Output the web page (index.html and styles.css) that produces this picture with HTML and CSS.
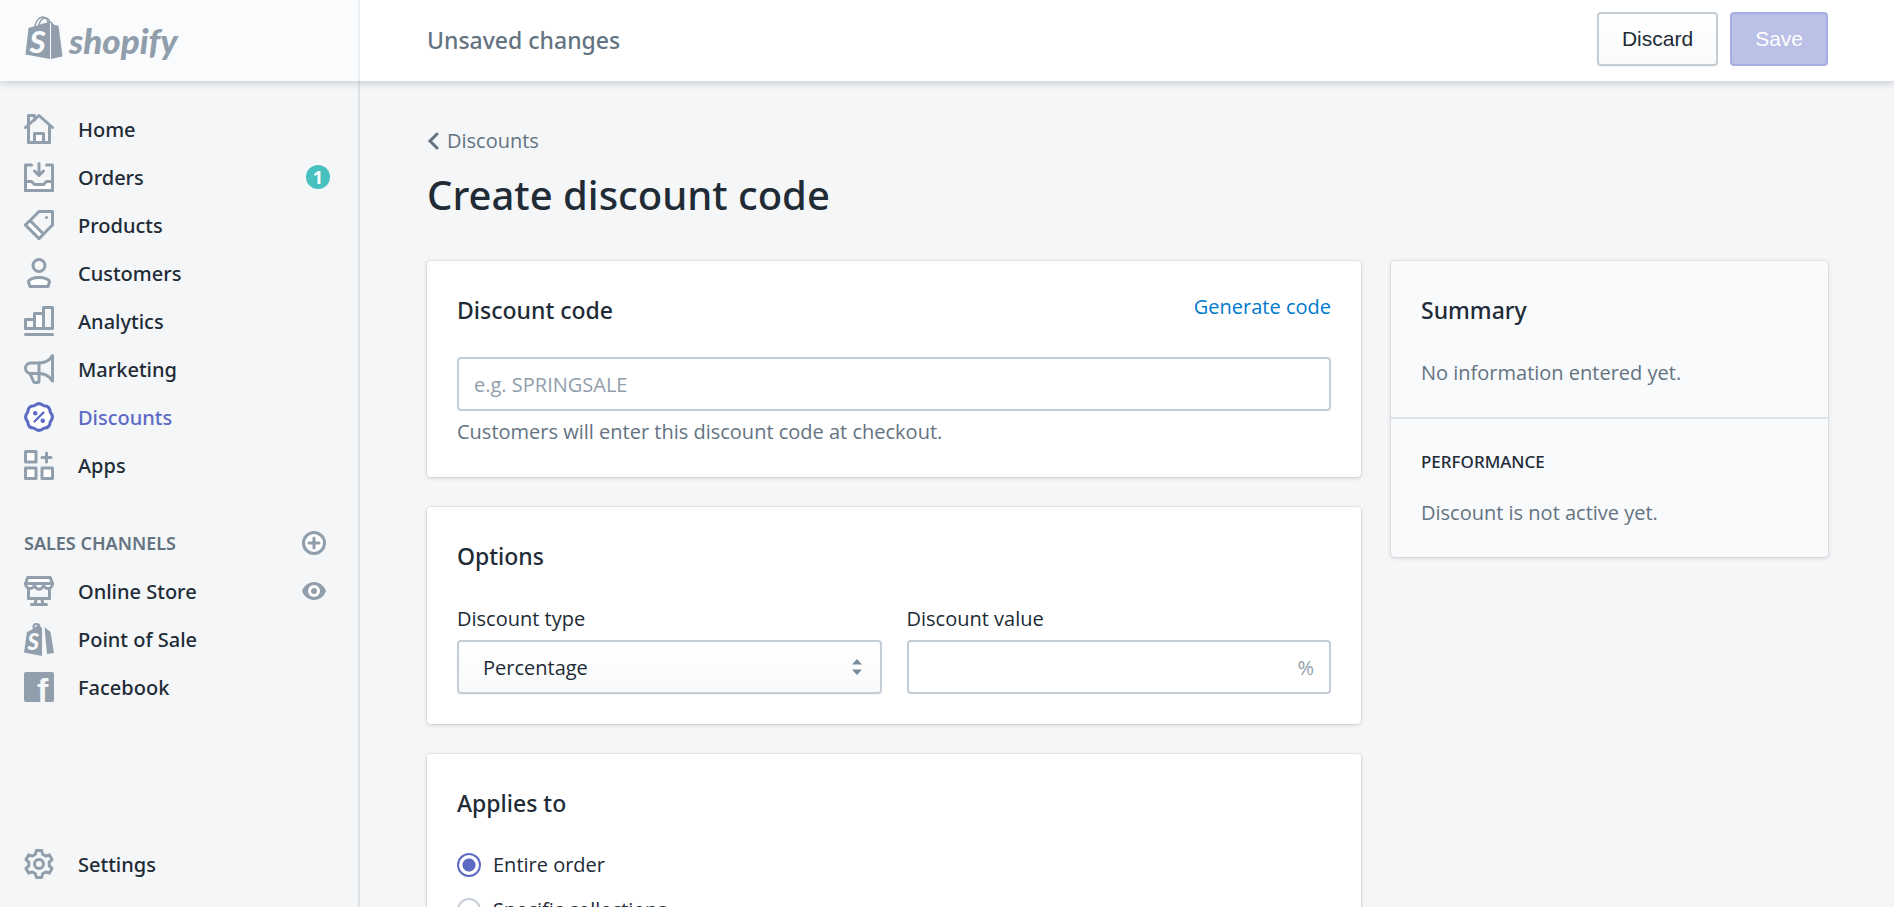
FILE: index.html
```html
<!DOCTYPE html>
<html lang="en">
<head>
    <meta charset="UTF-8">
    <meta name="viewport" content="width=device-width, initial-scale=1.0">
    <title>Create discount code</title>
    <link rel="stylesheet" href="styles.css">
</head>
<body>
    <header class="topbar">
        <a class="brand" href="#">
            <svg class="brand-bag" viewBox="0 0 37 44" aria-hidden="true">
                <path d="M9 12C10 5 14 1 17 1s6 3 6 8M13 11c1-6 4-9 7-9 2 0 4 2 5 5" fill="none" stroke="#919eab" stroke-width="1.5"/>
                <path d="M3 12L24.500 5.500V43L0 38.500z" fill="#919eab"/>
                <path d="M25.500 5.500L29 9l4 .5 4 31L25.500 43z" fill="#919eab"/>
                <text x="4" y="37" class="bag-letter" font-size="31">S</text>
            </svg>
            <span class="brand-name">shopify</span>
        </a>
        <div class="savebar">
            <h2 class="savebar-title">Unsaved changes</h2>
            <button class="button" type="button">Discard</button>
            <button class="button primary" type="submit" form="discount-form" disabled>Save</button>
        </div>
    </header>

    <div class="frame">
        <nav class="sidebar">
            <ul class="nav">
                <li><a class="nav-item" href="#">
                    <svg class="icon" viewBox="0 0 20 20"><path d="M3 8V1h4v3M3 8.500V19h14V8.500"/><path d="M1 9l9-8 9 8"/><path class="white" d="M7 19v-6h6v6z"/></svg>
                    <span>Home</span></a></li>
                <li><a class="nav-item" href="#">
                    <svg class="icon" viewBox="0 0 20 20"><path d="M5 2H1v17h18V2h-4"/><path class="white" d="M1 13h4l2 2h6l2-2h4v6H1z"/><path d="M10 1v7M7 6l3 3 3-3"/></svg>
                    <span>Orders</span><span class="badge">1</span></a></li>
                <li><a class="nav-item" href="#">
                    <svg class="icon" viewBox="0 0 20 20"><path d="M10 1h9v9l-9 9-9-9z"/><path class="white" d="M4 7l9 9-3 3-9-9z"/><circle class="solid" cx="15" cy="5" r=".5"/></svg>
                    <span>Products</span></a></li>
                <li><a class="nav-item" href="#">
                    <svg class="icon" viewBox="0 0 20 20"><circle cx="10" cy="5" r="4"/><path class="white" d="M3 16c0-2 4-3 7-3s7 1 7 3l-1 3H4z"/></svg>
                    <span>Customers</span></a></li>
                <li><a class="nav-item" href="#">
                    <svg class="icon" viewBox="0 0 20 20"><path d="M1 9h6v6H1zM13 1h6v14h-6z"/><path class="white" d="M7 5h6v10H7z"/><path d="M1 19h18"/></svg>
                    <span>Analytics</span></a></li>
                <li><a class="nav-item" href="#">
                    <svg class="icon" viewBox="0 0 20 20"><path d="M19 1c-2 3.500-5 5-9 5H4.500a3.500 3.500 0 0 0 0 7H10c4 0 7 2 9 5z"/><path d="M10 6v12q0 1-1 1H7.500q-1 0-1.300-1L4 13"/></svg>
                    <span>Marketing</span></a></li>
                <li><a class="nav-item active" href="#">
                    <svg class="icon" viewBox="0 0 20 20"><path class="white" d="M17.500 6.900Q20.400 10 17.500 13.100Q17.400 17.400 13.100 17.500Q10 20.400 6.900 17.500Q2.600 17.400 2.500 13.100Q-.4 10 2.500 6.900Q2.600 2.600 6.900 2.500Q10-.4 13.100 2.500Q17.400 2.600 17.500 6.900z"/><path d="M7 13l6-6" stroke-width="1.5"/><circle class="solid" cx="7.500" cy="7.500" r="1"/><circle class="solid" cx="12.500" cy="12.500" r="1"/></svg>
                    <span>Discounts</span></a></li>
                <li><a class="nav-item" href="#">
                    <svg class="icon" viewBox="0 0 20 20"><path class="white" d="M1 1h7v7H1zM1 12h7v7H1zM12 12h7v7h-7z"/><path d="M15 2v6M12 5h6"/></svg>
                    <span>Apps</span></a></li>
            </ul>

            <div class="nav-heading">
                <h3>Sales channels</h3>
                <button class="icon-button" type="button" aria-label="Add sales channel">
                    <svg class="icon small" viewBox="0 0 24 24"><circle class="white" cx="12" cy="12" r="10.500" stroke-width="3"/><path d="M12 7v10M7 12h10" stroke-width="3"/></svg>
                </button>
            </div>
            <ul class="nav">
                <li class="nav-row"><a class="nav-item" href="#">
                    <svg class="icon" viewBox="0 0 20 20"><path d="M3 9v6h14V9M8 15l-.5 4h5l-.5-4M5 19h10"/><path class="white" d="M2.500 1h15L19 5H1z"/><path class="white" d="M1 5c0 4.500 6 4.500 6 0 0 5 6 5 6 0 0 4.500 6 4.500 6 0z"/></svg>
                    <span>Online Store</span></a>
                    <button class="icon-button" type="button" aria-label="View your online store">
                        <svg class="eye" viewBox="0 0 24 18"><path d="M12 0C5 0 1 6 0 9c1 3 5 9 12 9s11-6 12-9C23 6 19 0 12 0z" fill="#919eab"/><circle cx="12" cy="9" r="4.500" fill="#919eab" stroke="#fff" stroke-width="3"/></svg>
                    </button>
                </li>
                <li><a class="nav-item" href="#">
                    <svg class="icon tall" viewBox="0 0 30 33"><path class="shape" d="M3 9l6-3 5-4 4 3v28L0 29.500z"/><circle cx="12.500" cy="4" r="3"/><path class="shape" d="M20.500 4l6 5L30 30l-7 1z"/><path d="M19.500 4v28" stroke="#f4f6f8"/><text class="bag-letter" x="3.500" y="27" font-size="22">S</text></svg>
                    <span>Point of Sale</span></a></li>
                <li><a class="nav-item" href="#">
                    <svg class="icon" viewBox="0 0 30 30"><rect class="shape" width="30" height="30" rx="2"/><text class="facebook-letter" x="13" y="30">f</text></svg>
                    <span>Facebook</span></a></li>
            </ul>

            <a class="nav-item settings" href="#">
                <svg class="icon" viewBox="-10 -10 20 20"><path d="M-2.400-6.500L-1.800-9h3.600l.6 2.500 2 1.200 2.500-.8 1.800 3.200-1.900 1.700v2.400l1.900 1.700-1.800 3.200-2.500-.8-2 1.200-.6 2.500h-3.600l-.6-2.500-2-1.200-2.500.8-1.800-3.200 1.900-1.700v-2.400l-1.900-1.700 1.800-3.200 2.500.8z"/><circle cx="0" cy="0" r="3"/></svg>
                <span>Settings</span></a>
        </nav>

        <main class="content">
            <a class="breadcrumb" href="#">
                <svg class="chevron" viewBox="0 0 12 18" aria-hidden="true"><path d="M10 2L3 9l7 7"/></svg>
                <span>Discounts</span>
            </a>
            <h1 class="page-title">Create discount code</h1>

            <div class="layout">
                <form class="layout-main" id="discount-form">
                    <section class="card">
                        <div class="card-header">
                            <h2 class="card-title"><label for="code">Discount code</label></h2>
                            <a class="link" href="#">Generate code</a>
                        </div>
                        <input class="input" id="code" type="text" placeholder="e.g. SPRINGSALE">
                        <p class="help">Customers will enter this discount code at checkout.</p>
                    </section>

                    <section class="card">
                        <div class="card-header">
                            <h2 class="card-title">Options</h2>
                        </div>
                        <div class="fields">
                            <div class="field">
                                <label for="type">Discount type</label>
                                <div class="control">
                                    <select class="input select" id="type">
                                        <option>Percentage</option>
                                        <option>Fixed amount</option>
                                        <option>Free shipping</option>
                                    </select>
                                    <svg class="select-arrows" viewBox="0 0 10 16" aria-hidden="true"><path d="M0 5.500L5 0l5 5.500zM0 10.500h10L5 16z"/></svg>
                                </div>
                            </div>
                            <div class="field">
                                <label for="value">Discount value</label>
                                <div class="control">
                                    <input class="input" id="value" type="text">
                                    <span class="suffix">%</span>
                                </div>
                            </div>
                        </div>
                    </section>

                    <section class="card">
                        <div class="card-header">
                            <h2 class="card-title">Applies to</h2>
                        </div>
                        <div class="choices">
                            <label class="choice"><input type="radio" name="applies" checked>Entire order</label>
                            <label class="choice"><input type="radio" name="applies">Specific collections</label>
                            <label class="choice"><input type="radio" name="applies">Specific products</label>
                        </div>
                    </section>
                </form>

                <aside class="layout-side">
                    <div class="card summary">
                        <section class="summary-section">
                            <h2 class="card-title">Summary</h2>
                            <p>No information entered yet.</p>
                        </section>
                        <section class="summary-section performance">
                            <h3>Performance</h3>
                            <p>Discount is not active yet.</p>
                        </section>
                    </div>
                </aside>
            </div>
        </main>
    </div>
</body>
</html>
```
FILE: styles.css
```css
* {
    box-sizing: border-box;
}
body {
    display: flex;
    flex-direction: column;
    height: 100vh;
    margin: 0;
    background-color: #f4f6f8;
    color: #212b36;
    font-family: "Segoe UI", "Open Sans", sans-serif;
    font-size: 20px;
    line-height: 30px;
}
h1, h2, h3, p, ul {
    margin: 0;
    padding: 0;
}
h1, h2, h3, .nav-item {
    font-family: "Segoe UI", "Noto Sans", sans-serif;
    font-weight: 500;
}
ul {
    list-style: none;
}
a {
    color: inherit;
    text-decoration: none;
}

/* top bar */
.topbar {
    position: relative;
    z-index: 1;
    display: flex;
    flex: none;
    height: 81px;
    background-color: #fff;
    box-shadow: 0 1px 8px rgba(33, 43, 54, 0.25);
}
.brand {
    display: flex;
    flex: none;
    align-items: flex-start;
    gap: 6px;
    width: 360px;
    padding: 16px 25px;
    border-right: 2px solid #ebeef2;
    background-color: #fafbfd;
}
.brand-bag {
    width: 38px;
    height: 44px;
}
.brand-name {
    color: #919eab;
    font-family: Lato, sans-serif;
    font-size: 35px;
    font-style: italic;
    font-weight: 900;
    line-height: 48px;
}
.bag-letter {
    fill: #fafbfd;
    stroke: none;
    font-family: Lato, sans-serif;
    font-style: italic;
    font-weight: 900;
}
.savebar {
    display: flex;
    flex: 1;
    align-items: flex-start;
    gap: 12px;
    padding: 12px 66px 12px 67px;
}
.savebar-title {
    flex: 1;
    color: #637381;
    font-size: 23px;
    line-height: 56px;
}
.button {
    height: 54px;
    padding: 0 23px;
    border: 2px solid #c4cdd5;
    border-radius: 4px;
    background: linear-gradient(#fff, #f9fafb);
    box-shadow: 0 1px 1px rgba(33, 43, 54, 0.06);
    color: #212b36;
    font-family: Arial, "Liberation Sans", sans-serif;
    font-size: 21px;
}
.button.primary {
    border-color: #a7ace2;
    background: #bac0e6;
    box-shadow: none;
    color: #fff;
}

/* sidebar */
.frame {
    display: flex;
    flex: 1;
    min-height: 0;
}
.sidebar {
    display: flex;
    flex: none;
    flex-direction: column;
    width: 360px;
    padding: 24px 32px 19px 24px;
    border-right: 2px solid #dfe1e8;
}
.nav-row {
    display: flex;
    align-items: center;
}
.nav-item {
    display: flex;
    flex: 1;
    align-items: center;
    gap: 24px;
    height: 48px;
}
.nav-item span {
    padding-top: 2px;
}
.nav-item.active {
    color: #5c6ac4;
}
.icon {
    flex: none;
    width: 30px;
    height: 30px;
    fill: none;
    stroke: #919eab;
    stroke-width: 2;
    stroke-linecap: round;
    stroke-linejoin: round;
    overflow: visible;
}
.icon.small {
    width: 24px;
    height: 24px;
}
.icon.tall {
    height: 33px;
}
.active .icon {
    stroke: #5c6ac4;
}
.icon .white {
    fill: #fff;
}
.icon .solid {
    fill: #919eab;
    stroke-width: 1;
}
.active .icon .solid {
    fill: #5c6ac4;
}
.icon .shape {
    fill: #919eab;
    stroke: none;
}
.facebook-letter {
    fill: #f4f6f8;
    stroke: none;
    font-family: "Liberation Sans", Arial, sans-serif;
    font-size: 34px;
    font-weight: 700;
}
.nav-item .badge {
    width: 24px;
    height: 24px;
    margin-left: auto;
    margin-right: -4px;
    padding: 0;
    border-radius: 12px;
    background-color: #47c1bf;
    color: #fff;
    font-size: 18px;
    font-weight: 700;
    line-height: 24px;
    text-align: center;
}
.nav-heading {
    display: flex;
    align-items: center;
    justify-content: space-between;
    height: 48px;
    margin-top: 30px;
}
.nav-heading h3 {
    color: #637381;
    font-size: 18px;
    font-weight: 600;
    text-transform: uppercase;
}
.icon-button {
    display: flex;
    padding: 0;
    border: none;
    background: none;
}
.eye {
    width: 24px;
    height: 18px;
}
.settings {
    flex: none;
    margin-top: auto;
}

/* page */
.content {
    flex: 1;
    padding: 45px 66px 45px 67px;
    overflow-y: auto;
    scrollbar-width: none;
}
.breadcrumb {
    display: flex;
    align-items: center;
    gap: 8px;
    color: #637381;
}
.chevron {
    width: 12px;
    height: 18px;
    fill: none;
    stroke: #637381;
    stroke-width: 3;
    stroke-linecap: round;
}
.page-title {
    margin: 11px 0 38px;
    font-size: 40px;
    line-height: 56px;
}
.layout {
    display: grid;
    grid-template-columns: 2fr 1fr;
    align-items: start;
}
.layout-side {
    padding-left: 30px;
}
.card {
    padding: 31px 30px 30px;
    border-radius: 4px;
    background-color: #fff;
    box-shadow: 0 0 0 1px rgba(63, 63, 68, 0.06), 0 1px 4px rgba(63, 63, 68, 0.2);
}
.card + .card {
    margin-top: 30px;
}
.card-header {
    display: flex;
    justify-content: space-between;
    margin-bottom: 29px;
}
.card-title {
    font-size: 23px;
    line-height: 36px;
}
.link {
    color: #007ace;
}
.input {
    display: block;
    width: 100%;
    height: 54px;
    padding: 0 15px;
    border: 2px solid #c4cdd5;
    border-radius: 4px;
    background-color: #fff;
    color: #212b36;
    font-family: inherit;
    font-size: 20px;
}
.input::placeholder {
    color: #919eab;
    opacity: 1;
}
.help {
    margin-top: 6px;
    color: #637381;
}
.fields {
    display: flex;
    gap: 25px;
}
.field {
    flex: 1;
}
.field label {
    display: block;
    line-height: 32px;
}
.control {
    position: relative;
    margin-top: 5px;
}
.select {
    padding: 0 24px;
    appearance: none;
    background: linear-gradient(#fff, #f9fafb);
    box-shadow: 0 1px 1px rgba(33, 43, 54, 0.06);
}
.select-arrows {
    position: absolute;
    top: 19px;
    right: 20px;
    width: 10px;
    height: 16px;
    fill: #798c9c;
    pointer-events: none;
}
.suffix {
    position: absolute;
    top: 13px;
    right: 17px;
    color: #919eab;
}
.choices {
    display: flex;
    flex-direction: column;
    gap: 15px;
}
.choice {
    display: flex;
    align-items: center;
    gap: 12px;
}
.choice input {
    width: 24px;
    height: 24px;
    margin: 0;
    border: 2px solid #c4cdd5;
    border-radius: 50%;
    appearance: none;
    background-color: #fff;
}
.choice input:checked {
    border-color: #5c6ac4;
    background: radial-gradient(circle, #5c6ac4 6px, #fff 7px);
}

/* summary */
.summary {
    padding: 0;
    background-color: #f9fafc;
}
.summary-section {
    padding: 31px 30px 29px;
}
.summary-section .card-title {
    margin-bottom: 30px;
}
.summary-section p {
    color: #637381;
}
.performance {
    border-top: 2px solid #dfe1e8;
}
.performance h3 {
    margin-bottom: 24px;
    font-size: 17px;
    line-height: 24px;
    text-transform: uppercase;
}
```
